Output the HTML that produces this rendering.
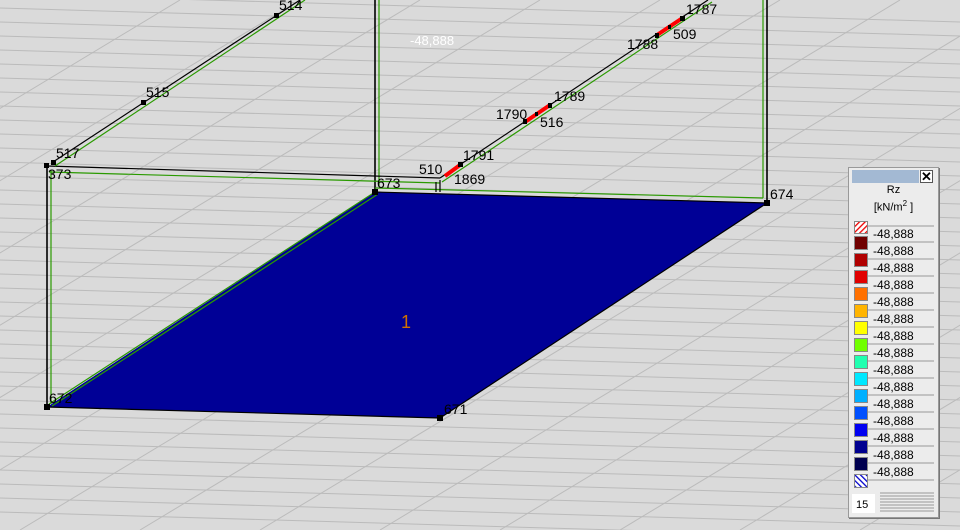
<!DOCTYPE html>
<html><head><meta charset="utf-8"><style>
html,body{margin:0;padding:0;width:960px;height:530px;overflow:hidden;background:#dadada;font-family:"Liberation Sans",sans-serif}
svg{position:absolute;left:0;top:0}
</style></head><body>
<svg width="960" height="530" viewBox="0 0 960 530" xmlns="http://www.w3.org/2000/svg">
<defs>
<clipPath id="c"><rect width="960" height="530"/></clipPath>
</defs>
<g clip-path="url(#c)" stroke="#bbbbbb" stroke-width="1" fill="none">
<path d="M0 -6 L960 22"/><path d="M0 8 L960 36"/><path d="M0 22 L960 50"/><path d="M0 36 L960 64"/><path d="M0 50 L960 78"/><path d="M0 64 L960 92"/><path d="M0 78 L960 106"/><path d="M0 92 L960 120"/><path d="M0 106 L960 134"/><path d="M0 120 L960 148"/><path d="M0 134 L960 162"/><path d="M0 148 L960 176"/><path d="M0 162 L960 190"/><path d="M0 176 L960 204"/><path d="M0 190 L960 218"/><path d="M0 204 L960 232"/><path d="M0 218 L960 246"/><path d="M0 232 L960 260"/><path d="M0 246 L960 274"/><path d="M0 260 L960 288"/><path d="M0 274 L960 302"/><path d="M0 288 L960 316"/><path d="M0 302 L960 330"/><path d="M0 316 L960 344"/><path d="M0 330 L960 358"/><path d="M0 344 L960 372"/><path d="M0 358 L960 386"/><path d="M0 372 L960 400"/><path d="M0 386 L960 414"/><path d="M0 400 L960 428"/><path d="M0 414 L960 442"/><path d="M0 428 L960 456"/><path d="M0 442 L960 470"/><path d="M0 456 L960 484"/><path d="M0 470 L960 498"/><path d="M0 484 L960 512"/><path d="M0 498 L960 526"/><path d="M0 512 L960 540"/>
<path d="M-700 530 L180 0"/><path d="M-580 530 L300 0"/><path d="M-460 530 L420 0"/><path d="M-340 530 L540 0"/><path d="M-220 530 L660 0"/><path d="M-100 530 L780 0"/><path d="M20 530 L900 0"/><path d="M140 530 L1020 0"/><path d="M260 530 L1140 0"/><path d="M380 530 L1260 0"/><path d="M500 530 L1380 0"/><path d="M620 530 L1500 0"/><path d="M740 530 L1620 0"/><path d="M860 530 L1740 0"/>
</g>
<polygon points="375,192 767,203 440,418 47,407" fill="#000096"/>
<g fill="none" stroke-width="1.2">
<path d="M47,407 L440,418 L767,203" stroke="#000"/>
<path d="M49,404 L375,192 M52,406 L378,194" stroke="#2a9a00"/>
<path d="M375,192 L767,203" stroke="#000"/>
<path d="M47,165 L47,407" stroke="#000" stroke-width="1.6"/>
<path d="M51,170 L51,404" stroke="#2a9a00"/>
<path d="M375,0 L375,192" stroke="#000" stroke-width="1.6"/>
<path d="M379,0 L379,186" stroke="#2a9a00"/>
<path d="M767,0 L767,203" stroke="#000" stroke-width="1.6"/>
<path d="M763,0 L763,198" stroke="#2a9a00"/>
<path d="M375,188 L763,198" stroke="#2a9a00"/>
<path d="M47,166 L440,178" stroke="#000"/>
<path d="M49,172 L440,183" stroke="#2a9a00"/>
<path d="M53,162 L300,0" stroke="#000"/>
<path d="M55,166 L305,0" stroke="#2a9a00"/>
<path d="M440,178 L708,0" stroke="#000"/>
<path d="M442,182 L712,2" stroke="#2a9a00"/>
<path d="M440,180 L440,192 M436,182 L436,192" stroke="#000"/>
</g>
<g stroke="#f00" stroke-width="4">
<path d="M445,176 L460,165"/><path d="M525,122 L550,105"/><path d="M657,35 L681,19"/>
</g>
<g fill="#000">
<rect x="44" y="404" width="6" height="6"/><rect x="437" y="415" width="6" height="6"/><rect x="372" y="189" width="6" height="6"/><rect x="764" y="200" width="6" height="6"/>
<rect x="44" y="163" width="5" height="5"/><rect x="51" y="160" width="5" height="5"/><rect x="141" y="100" width="5" height="5"/><rect x="274" y="13" width="5" height="5"/>
<rect x="458" y="162" width="5" height="5"/><rect x="523" y="119" width="4" height="5"/><rect x="535" y="112" width="3" height="4"/><rect x="548" y="103" width="4" height="5"/>
<rect x="655" y="33" width="4" height="5"/><rect x="668" y="25" width="3" height="4"/><rect x="680" y="16" width="5" height="5"/>
</g>
<g font-size="14" fill="#000" font-family="Liberation Sans,sans-serif">
<text x="56" y="158">517</text><text x="48" y="179">373</text><text x="146" y="97">515</text><text x="279" y="10">514</text>
<text x="377" y="188">673</text><text x="419" y="174">510</text><text x="454" y="184">1869</text><text x="463" y="160">1791</text>
<text x="496" y="119">1790</text><text x="540" y="127">516</text><text x="554" y="101">1789</text>
<text x="627" y="49">1788</text><text x="673" y="39">509</text><text x="686" y="14">1787</text>
<text x="770" y="199">674</text><text x="49" y="403">672</text><text x="444" y="414">671</text>
</g>
<text x="410" y="45" font-size="13" fill="#fff">-48,888</text>
<text x="401" y="328" font-size="18" fill="#d07000">1</text>
</svg>
<div style="position:absolute;left:848px;top:167px;width:89px;height:349px;background:#ececec;border:1px solid #999;box-shadow:1px 1px 0 #777"></div>
<div style="position:absolute;left:852px;top:170px;width:67px;height:13px;background:#a3b9d3"></div>
<div style="position:absolute;left:920px;top:170px;width:13px;height:13px;background:#fff;border:1px solid #555;box-sizing:border-box;font:bold 13px/11px 'Liberation Sans';text-align:center">✕</div>
<div style="position:absolute;left:849px;top:184px;width:89px;text-align:center;font-size:11px;line-height:13px;color:#000">Rz<br>[kN/m<sup style="font-size:8px">2</sup> ]</div>
<svg width="960" height="530" style="position:absolute;left:0;top:0" font-family="Liberation Sans,sans-serif">
<defs>
<pattern id="hr2" width="4" height="4" patternUnits="userSpaceOnUse" patternTransform="rotate(45)"><rect width="4" height="4" fill="#fff"/><rect width="1.3" height="4" fill="#e00"/></pattern>
<pattern id="hb2" width="4" height="4" patternUnits="userSpaceOnUse" patternTransform="rotate(-45)"><rect width="4" height="4" fill="#fff"/><rect width="1.3" height="4" fill="#00c"/></pattern>
</defs>
<g stroke="#999" stroke-width="1">
<path d="M868 226H934M868 242H934M868 259H934M868 276H934M868 293H934M868 310H934M868 327H934M868 344H934M868 361H934M868 378H934M868 395H934M868 412H934M868 429H934M868 446H934M868 463H934M868 480H934"/>
<path d="M880 493H934M880 496H934M880 499H934M880 502H934M880 505H934M880 508H934M880 511H934"/>
</g>
<g stroke="#888" stroke-width="1">
<rect x="854.5" y="221.5" width="13" height="12" fill="url(#hr2)"/>
<rect x="854.5" y="236.5" width="13" height="13" fill="#700000"/>
<rect x="854.5" y="253.5" width="13" height="13" fill="#b00000"/>
<rect x="854.5" y="270.5" width="13" height="13" fill="#e00000"/>
<rect x="854.5" y="287.5" width="13" height="13" fill="#ff7000"/>
<rect x="854.5" y="304.5" width="13" height="13" fill="#ffb400"/>
<rect x="854.5" y="321.5" width="13" height="13" fill="#ffff00"/>
<rect x="854.5" y="338.5" width="13" height="13" fill="#70ff00"/>
<rect x="854.5" y="355.5" width="13" height="13" fill="#20ffb0"/>
<rect x="854.5" y="372.5" width="13" height="13" fill="#00e8ff"/>
<rect x="854.5" y="389.5" width="13" height="13" fill="#00b0ff"/>
<rect x="854.5" y="406.5" width="13" height="13" fill="#0050ff"/>
<rect x="854.5" y="423.5" width="13" height="13" fill="#0000f0"/>
<rect x="854.5" y="440.5" width="13" height="13" fill="#000090"/>
<rect x="854.5" y="457.5" width="13" height="13" fill="#000050"/>
<rect x="854.5" y="474.5" width="13" height="13" fill="url(#hb2)"/>
</g>
<g font-size="12" fill="#000">
<text x="873" y="238">-48,888</text><text x="873" y="255">-48,888</text><text x="873" y="272">-48,888</text><text x="873" y="289">-48,888</text><text x="873" y="306">-48,888</text><text x="873" y="323">-48,888</text><text x="873" y="340">-48,888</text><text x="873" y="357">-48,888</text><text x="873" y="374">-48,888</text><text x="873" y="391">-48,888</text><text x="873" y="408">-48,888</text><text x="873" y="425">-48,888</text><text x="873" y="442">-48,888</text><text x="873" y="459">-48,888</text><text x="873" y="476">-48,888</text>
</g>
<rect x="852" y="494" width="23" height="19" fill="#fff"/>
<text x="856" y="508" font-size="11" fill="#000">15</text>
</svg>
</body></html>
